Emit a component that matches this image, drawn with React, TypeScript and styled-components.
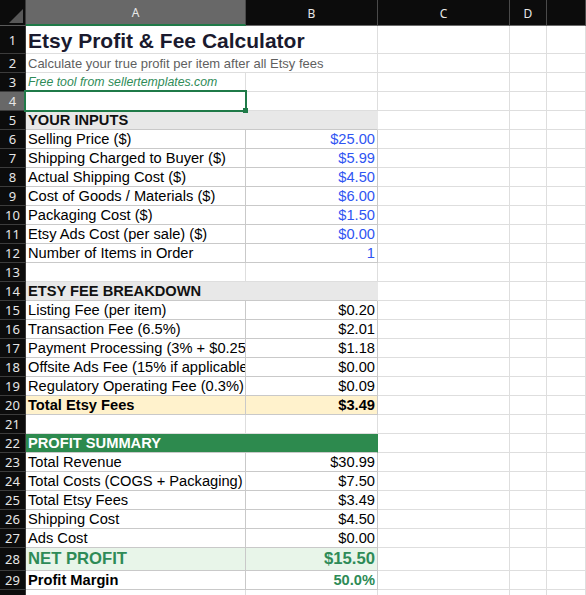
import React from 'react';
import styled, { createGlobalStyle } from 'styled-components';

const LIGHT = '#dedede';
const DARK = '#c9c9c9';
const GREEN = '#2e8b57';
const BLUE = '#2f55f2';

const GlobalStyle = createGlobalStyle`
  html, body { margin: 0; padding: 0; background: #ffffff; overflow: hidden; }
  body { font-family: "Liberation Sans", Arial, sans-serif; }
`;

const heights = [26, 28, ...Array(26).fill(19), 23, 19, 19];

const Sheet = styled.div`
  display: grid;
  grid-template-columns: 26px 220px 132px 132px 37px 1fr;
  grid-template-rows: ${heights.map((h) => `${h}px`).join(' ')};
  width: 586px;
  height: 595px;
  overflow: hidden;
  background: #ffffff;
`;

const Corner = styled.div`
  box-sizing: border-box;
  background: #0c0c0c;
  border-right: 1px solid #3a3a3a;
  border-bottom: 1px solid #5a5a5a;
  display: flex;
  align-items: flex-end;
  justify-content: flex-end;
  padding: 0 2px 2px 0;
`;

const ColHeader = styled.div<{ $selected?: boolean }>`
  box-sizing: border-box;
  background: ${(p) => (p.$selected ? '#686868' : '#0c0c0c')};
  border-right: 1px solid #4a4a4a;
  border-bottom: ${(p) => (p.$selected ? `2px solid #1f7a48` : '1px solid #6a6a6a')};
  color: #e8e8e8;
  font-family: "Noto Sans", "DejaVu Sans", sans-serif;
  font-size: 12px;
  display: flex;
  align-items: center;
  justify-content: center;
  padding-top: 1px;
`;

const RowHeader = styled.div<{ $selected?: boolean }>`
  box-sizing: border-box;
  background: ${(p) => (p.$selected ? '#686868' : '#0c0c0c')};
  border-right: 1px solid #3a3a3a;
  border-bottom: 1px solid #3c3c3c;
  color: #e6e6e6;
  font-family: "Noto Sans", "DejaVu Sans", sans-serif;
  font-size: 13px;
  display: flex;
  align-items: center;
  justify-content: center;
  overflow: hidden;
`;

type Tone = 'plain' | 'boxed' | 'section' | 'total' | 'summary' | 'net';

const tones: Record<Tone, { bg: string; bottom: string; right: string }> = {
  plain: { bg: '#ffffff', bottom: LIGHT, right: LIGHT },
  boxed: { bg: '#ffffff', bottom: DARK, right: DARK },
  section: { bg: '#e8e8e8', bottom: DARK, right: '#e8e8e8' },
  total: { bg: '#fff2cc', bottom: DARK, right: DARK },
  summary: { bg: '#2d8a4e', bottom: DARK, right: '#2d8a4e' },
  net: { bg: '#e8f5e9', bottom: DARK, right: DARK },
};

type CellProps = {
  $tone?: Tone;
  $span?: number;
  $align?: 'left' | 'right';
  $bold?: boolean;
  $italic?: boolean;
  $ink?: string;
  $size?: number;
  $bottom?: boolean;
};

const Cell = styled.div<CellProps>`
  box-sizing: border-box;
  grid-column: span ${(p) => p.$span ?? 1};
  display: flex;
  align-items: ${(p) => (p.$bottom ? 'flex-end' : 'center')};
  justify-content: ${(p) => (p.$align === 'right' ? 'flex-end' : 'flex-start')};
  padding: 0 2px;
  background: ${(p) => tones[p.$tone ?? 'plain'].bg};
  border-right: 1px solid ${(p) => tones[p.$tone ?? 'plain'].right};
  border-bottom: 1px solid ${(p) => tones[p.$tone ?? 'plain'].bottom};
  color: ${(p) => p.$ink ?? '#000000'};
  font-size: ${(p) => p.$size ?? 14.67}px;
  font-weight: ${(p) => (p.$bold ? 700 : 400)};
  font-style: ${(p) => (p.$italic ? 'italic' : 'normal')};
  line-height: normal;
  white-space: nowrap;
  overflow: hidden;
`;

const ActiveCell = styled(Cell)`
  position: relative;
  overflow: visible;
`;

const SelectionBox = styled.div`
  position: absolute;
  left: -2px;
  top: -2px;
  width: 223px;
  height: 22px;
  box-sizing: border-box;
  border: 2px solid #1f7a48;
  z-index: 2;
  pointer-events: none;
`;

const FillHandle = styled.div`
  position: absolute;
  left: 217px;
  top: 16px;
  width: 5px;
  height: 5px;
  background: #1f7a48;
  z-index: 3;
`;

const Tail = () => (
  <>
    <Cell />
    <Cell />
    <Cell />
  </>
);

type Line = { label: string; value: string };

const inputs: Line[] = [
  { label: 'Selling Price ($)', value: '$25.00' },
  { label: 'Shipping Charged to Buyer ($)', value: '$5.99' },
  { label: 'Actual Shipping Cost ($)', value: '$4.50' },
  { label: 'Cost of Goods / Materials ($)', value: '$6.00' },
  { label: 'Packaging Cost ($)', value: '$1.50' },
  { label: 'Etsy Ads Cost (per sale) ($)', value: '$0.00' },
  { label: 'Number of Items in Order', value: '1' },
];

const fees: Line[] = [
  { label: 'Listing Fee (per item)', value: '$0.20' },
  { label: 'Transaction Fee (6.5%)', value: '$2.01' },
  { label: 'Payment Processing (3% + $0.25)', value: '$1.18' },
  { label: 'Offsite Ads Fee (15% if applicable)', value: '$0.00' },
  { label: 'Regulatory Operating Fee (0.3%)', value: '$0.09' },
];

const summary: Line[] = [
  { label: 'Total Revenue', value: '$30.99' },
  { label: 'Total Costs (COGS + Packaging)', value: '$7.50' },
  { label: 'Total Etsy Fees', value: '$3.49' },
  { label: 'Shipping Cost', value: '$4.50' },
  { label: 'Ads Cost', value: '$0.00' },
];

const DataRows = ({ start, lines, ink }: { start: number; lines: Line[]; ink?: string }) => (
  <>
    {lines.map((l, i) => (
      <React.Fragment key={l.label}>
        <RowHeader>{start + i}</RowHeader>
        <Cell $tone="boxed">{l.label}</Cell>
        <Cell $tone="boxed" $align="right" $ink={ink}>
          {l.value}
        </Cell>
        <Tail />
      </React.Fragment>
    ))}
  </>
);

const BlankRow = ({ n }: { n: number }) => (
  <>
    <RowHeader>{n}</RowHeader>
    <Cell />
    <Cell />
    <Tail />
  </>
);

const SectionRow = ({ n, title, tone }: { n: number; title: string; tone: Tone }) => (
  <>
    <RowHeader>{n}</RowHeader>
    <Cell $tone={tone} $span={2} $bold $ink={tone === 'summary' ? '#ffffff' : '#111111'}>
      {title}
    </Cell>
    <Tail />
  </>
);

const CornerMark = () => (
  <svg width="14" height="14" viewBox="0 0 14 14">
    <polygon points="14,0 14,14 0,14" fill="#585858" />
  </svg>
);

export default function App() {
  return (
    <>
      <GlobalStyle />
      <Sheet>
        <Corner>
          <CornerMark />
        </Corner>
        <ColHeader $selected>A</ColHeader>
        <ColHeader>B</ColHeader>
        <ColHeader>C</ColHeader>
        <ColHeader>D</ColHeader>
        <ColHeader />

        <RowHeader>1</RowHeader>
        <Cell $span={2} $bold $size={21} $ink="#1a1a2e" $bottom>
          Etsy Profit &amp; Fee Calculator
        </Cell>
        <Tail />

        <RowHeader>2</RowHeader>
        <Cell $span={2} $size={13} $ink="#5f5f5f">
          Calculate your true profit per item after all Etsy fees
        </Cell>
        <Tail />

        <RowHeader>3</RowHeader>
        <Cell $italic $size={12.3} $ink={GREEN}>
          Free tool from sellertemplates.com
        </Cell>
        <Cell />
        <Tail />

        <RowHeader $selected>4</RowHeader>
        <ActiveCell>
          <SelectionBox />
          <FillHandle />
        </ActiveCell>
        <Cell />
        <Tail />

        <SectionRow n={5} title="YOUR INPUTS" tone="section" />
        <DataRows start={6} lines={inputs} ink={BLUE} />
        <BlankRow n={13} />

        <SectionRow n={14} title="ETSY FEE BREAKDOWN" tone="section" />
        <DataRows start={15} lines={fees} />
        <RowHeader>20</RowHeader>
        <Cell $tone="total" $bold>
          Total Etsy Fees
        </Cell>
        <Cell $tone="total" $bold $align="right">
          $3.49
        </Cell>
        <Tail />
        <BlankRow n={21} />

        <SectionRow n={22} title="PROFIT SUMMARY" tone="summary" />
        <DataRows start={23} lines={summary} />
        <RowHeader>28</RowHeader>
        <Cell $tone="net" $bold $size={16.67} $ink={GREEN}>
          NET PROFIT
        </Cell>
        <Cell $tone="net" $bold $size={16.67} $ink={GREEN} $align="right">
          $15.50
        </Cell>
        <Tail />

        <RowHeader>29</RowHeader>
        <Cell $tone="boxed" $bold>
          Profit Margin
        </Cell>
        <Cell $tone="boxed" $bold $ink={GREEN} $align="right">
          50.0%
        </Cell>
        <Tail />

        <BlankRow n={30} />
      </Sheet>
    </>
  );
}
